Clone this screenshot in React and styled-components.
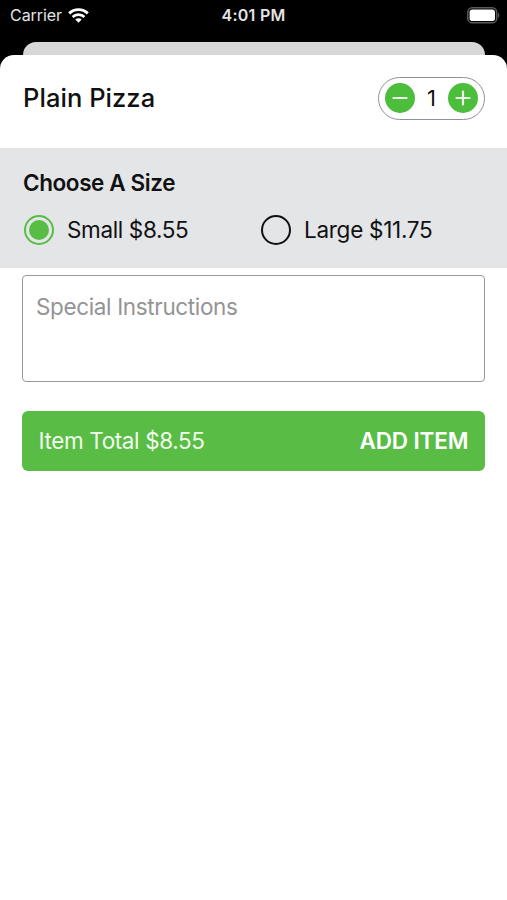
import { useState } from 'react';
import styled, { createGlobalStyle } from 'styled-components';

const GlobalStyle = createGlobalStyle`
  * {
    box-sizing: border-box;
  }

  body {
    margin: 0;
    background-color: #000;
    font-family: Inter, Roboto, "Liberation Sans", sans-serif;
    color: #111;
  }

  button, textarea {
    font-family: inherit;
  }
`;

const Screen = styled.div`
  display: flex;
  flex-direction: column;
  height: 900px;
  background-color: #000;
  overflow: hidden;
`;

const StatusBar = styled.div`
  display: grid;
  grid-template-columns: 1fr auto 1fr;
  align-items: center;
  height: 30px;
  padding: 0 7px 0 10px;
  color: #e4e4e4;
`;

const Carrier = styled.div`
  display: flex;
  align-items: center;
  gap: 6px;
  font-size: 16px;
  letter-spacing: -0.05px;
`;

const Clock = styled.div`
  margin-right: 3px;
  font-size: 16px;
  font-weight: 600;
  letter-spacing: 0.25px;
`;

const Battery = styled.svg`
  justify-self: end;
`;

/* Edge of the screen that sits behind the sheet */
const BackCard = styled.div`
  flex: none;
  height: 13px;
  margin: 11.5px 22px 0 23px;
  border-radius: 13px 13px 0 0;
  background-color: #d7d7d7;
`;

const Sheet = styled.main`
  flex: 1;
  background-color: #fff;
  border-radius: 14px 14px 0 0;
`;

const Header = styled.header`
  display: flex;
  align-items: center;
  justify-content: space-between;
  height: 93.5px;
  padding: 0 22px 6px 23px;
`;

const Title = styled.h1`
  margin: 0;
  padding-bottom: 2px;
  font-size: 25.5px;
  font-weight: 500;
  letter-spacing: 0.05px;
`;

const Stepper = styled.div`
  display: flex;
  align-items: center;
  justify-content: space-between;
  width: 107px;
  height: 43px;
  padding: 0 6px;
  border: 1px solid #928f98;
  border-radius: 22px;
`;

const StepButton = styled.button`
  display: flex;
  width: 30px;
  height: 30px;
  padding: 0;
  border: 0;
  border-radius: 50%;
  background-color: #4dbd3c;
  cursor: pointer;
`;

const Quantity = styled.span`
  font-size: 22px;
`;

const SizeSection = styled.section`
  height: 120px;
  padding: 21px 23px 0;
  background-color: #e3e5e7;
`;

const SectionTitle = styled.h2`
  margin: 0;
  font-size: 22.5px;
  font-weight: 600;
  letter-spacing: -0.4px;
  line-height: 28px;
`;

const Options = styled.div`
  display: grid;
  grid-template-columns: 237px 1fr;
  margin-top: 18px;
`;

const Option = styled.button`
  display: flex;
  align-items: center;
  gap: 13px;
  height: 30px;
  padding: 0 0 0 1px;
  border: 0;
  background: none;
  color: inherit;
  font-size: 22.5px;
  letter-spacing: ${props => props.$spacing};
  line-height: 28px;
  white-space: nowrap;
  cursor: pointer;
`;

const Radio = styled.span`
  display: flex;
  align-items: center;
  justify-content: center;
  width: 30px;
  height: 30px;
  border: 2px solid ${props => (props.$checked ? '#58bd45' : '#111')};
  border-radius: 50%;

  &::after {
    content: '';
    width: 20px;
    height: 20px;
    border-radius: 50%;
    background-color: ${props => (props.$checked ? '#58bd45' : 'transparent')};
  }
`;

const Form = styled.div`
  display: flex;
  flex-direction: column;
  gap: 29px;
  padding: 6.5px 22px 0;
`;

const Instructions = styled.textarea`
  height: 107px;
  padding: 17px 13px;
  border: 1.5px solid #999;
  border-radius: 4px;
  outline: none;
  resize: none;
  font-size: 22.5px;
  letter-spacing: -0.36px;
  line-height: 28px;

  &::placeholder {
    color: #949494;
  }
`;

const AddButton = styled.button`
  display: flex;
  align-items: center;
  justify-content: space-between;
  height: 60px;
  padding: 0 16.5px;
  border: 0;
  border-radius: 6px;
  background-color: #59bd45;
  color: #fff;
  font-size: 22.5px;
  cursor: pointer;
`;

const Total = styled.span`
  color: #f0fbed;
  letter-spacing: -0.38px;
`;

const AddLabel = styled.span`
  font-weight: 600;
  letter-spacing: -0.12px;
`;

const sizes = [
  { name: 'Small', price: 8.55, spacing: '-0.37px' },
  { name: 'Large', price: 11.75, spacing: '-0.28px' },
];

function WifiIcon() {
  return (
    <svg width="21" height="15" viewBox="0 0 21 15" fill="none" stroke="#fff">
      <path d="M1.2 5.4a13.4 13.4 0 0 1 18.6 0" strokeWidth="2.9" />
      <path d="M4.6 9a8.5 8.5 0 0 1 11.8 0" strokeWidth="2.7" />
      <path d="M10.5 14.8 7.3 11.6a4.6 4.6 0 0 1 6.4 0z" fill="#fff" stroke="none" />
    </svg>
  );
}

function BatteryIcon() {
  return (
    <Battery width="33" height="17" viewBox="0 0 33 17">
      <rect x="0.8" y="0.8" width="28.9" height="15" rx="4.4" fill="none" stroke="#5a5a5a" strokeWidth="1.5" />
      <rect x="2.6" y="2.6" width="25.4" height="11.4" rx="2.8" fill="#fff" />
      <path d="M31 5.8c1.8.8 1.8 4.2 0 5z" fill="#5a5a5a" />
    </Battery>
  );
}

function StepIcon({ plus }) {
  return (
    <svg width="30" height="30" viewBox="0 0 30 30" stroke="#effaeb" strokeWidth="2.2" strokeLinecap="round">
      <path d="M8.5 15h13" />
      {plus && <path d="M15 8.5v13" />}
    </svg>
  );
}

export default function App() {
  const [quantity, setQuantity] = useState(1);
  const [selected, setSelected] = useState(0);
  const total = (sizes[selected].price * quantity).toFixed(2);

  return (
    <>
      <GlobalStyle />
      <Screen>
        <StatusBar>
          <Carrier>
            Carrier
            <WifiIcon />
          </Carrier>
          <Clock>4:01 PM</Clock>
          <BatteryIcon />
        </StatusBar>
        <BackCard />
        <Sheet>
          <Header>
            <Title>Plain Pizza</Title>
            <Stepper>
              <StepButton onClick={() => setQuantity(prev => Math.max(1, prev - 1))}>
                <StepIcon />
              </StepButton>
              <Quantity>{quantity}</Quantity>
              <StepButton onClick={() => setQuantity(prev => prev + 1)}>
                <StepIcon plus />
              </StepButton>
            </Stepper>
          </Header>
          <SizeSection>
            <SectionTitle>Choose A Size</SectionTitle>
            <Options>
              {sizes.map((size, index) => (
                <Option key={size.name} $spacing={size.spacing} onClick={() => setSelected(index)}>
                  <Radio $checked={index === selected} />
                  {size.name} ${size.price.toFixed(2)}
                </Option>
              ))}
            </Options>
          </SizeSection>
          <Form>
            <Instructions placeholder="Special Instructions" />
            <AddButton>
              <Total>Item Total ${total}</Total>
              <AddLabel>ADD ITEM</AddLabel>
            </AddButton>
          </Form>
        </Sheet>
      </Screen>
    </>
  );
}
